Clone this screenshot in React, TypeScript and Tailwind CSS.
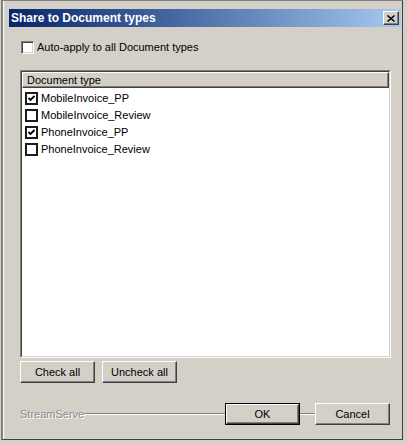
import { useState } from 'react';

type DocType = { name: string; checked: boolean };

const initialTypes: DocType[] = [
  { name: 'MobileInvoice_PP', checked: true },
  { name: 'MobileInvoice_Review', checked: false },
  { name: 'PhoneInvoice_PP', checked: true },
  { name: 'PhoneInvoice_Review', checked: false },
];

function Check({ checked, flat }: { checked: boolean; flat?: boolean }) {
  return (
    <span
      className={
        flat
          ? 'flex size-[13px] shrink-0 items-center justify-center border-2 border-[#1c1c1c] bg-white'
          : 'flex size-[13px] shrink-0 items-center justify-center border-t border-l border-[#808080] border-r border-b border-r-white border-b-white bg-white shadow-[inset_1px_1px_#404040,inset_-1px_-1px_#d4d0c8]'
      }
    >
      {checked && (
        <svg width="9" height="9" viewBox="0 0 9 9">
          <polyline points="1.5,4 3.5,6 7.5,2" fill="none" stroke="#000" strokeWidth="1.8" />
        </svg>
      )}
    </span>
  );
}

function Button({ label, isDefault }: { label: string; isDefault?: boolean }) {
  const inner = (
    <span className="flex h-full w-full items-center justify-center border-t border-l border-white border-r border-b border-r-[#404040] border-b-[#404040] bg-[#d4d0c8] shadow-[inset_-1px_-1px_#808080]">
      {label}
    </span>
  );
  return (
    <button
      type="button"
      className={
        isDefault
          ? 'h-[22px] w-[75px] shrink-0 border border-black p-0 text-[11px] leading-none'
          : 'h-[22px] w-[75px] shrink-0 p-0 text-[11px] leading-none'
      }
    >
      {inner}
    </button>
  );
}

export default function App() {
  const [types, setTypes] = useState<DocType[]>(initialTypes);
  const [autoApply, setAutoApply] = useState(false);

  const setAll = (checked: boolean) => setTypes(types.map((t) => ({ ...t, checked })));

  return (
    <div className="h-[444px] w-[407px] overflow-hidden bg-[#d4d0c8] pl-[1px] font-['Liberation_Sans',Arial,sans-serif] text-[11px] text-black">
      <div className="h-[440px] w-[402px] border-t border-l-2 border-[#808080] border-r border-b border-r-[#404040] border-b-[#404040]">
        <div className="h-full border-l border-white pt-[8px] pl-[5px] pr-[1px]">
          {/* title bar */}
          <div className="flex h-[18px] items-center justify-between bg-gradient-to-r from-[#0a246a] to-[#a6caf0] pr-[2px] pl-[2px]">
            <span className="text-[12px] font-bold text-white">Share to Document types</span>
            <span className="flex h-[14px] w-[16px] items-center justify-center border-t border-l border-white border-r border-b border-r-[#404040] border-b-[#404040] bg-[#d4d0c8] shadow-[inset_-1px_-1px_#808080]">
              <svg width="8" height="7" viewBox="0 0 8 7">
                <path d="M0.5 0.5 L7.5 6.5 M7.5 0.5 L0.5 6.5" stroke="#000" strokeWidth="1.5" />
              </svg>
            </span>
          </div>

          <div className="pl-[11px] pr-[10px]">
            {/* auto apply */}
            <label className="mt-[14px] flex h-[13px] items-center gap-[3px] pl-[1px]" onClick={() => setAutoApply(!autoApply)}>
              <Check checked={autoApply} />
              <span>Auto-apply to all Document types</span>
            </label>

            {/* list */}
            <div className="mt-[16px] h-[288px] border-t border-l border-[#808080] border-r border-b border-r-white border-b-white">
              <div className="h-full border-t border-l border-[#404040] border-r border-b border-r-[#d4d0c8] border-b-[#d4d0c8] bg-white">
                <div className="flex h-[16px] items-center border-t border-l border-white border-r border-b border-r-[#404040] border-b-[#404040] bg-[#d4d0c8] pl-[4px] shadow-[inset_-1px_-1px_#808080]">
                  Document type
                </div>
                <div className="pt-[2px]">
                  {types.map((t, i) => (
                    <div
                      key={t.name}
                      className="flex h-[17px] items-center gap-[3px] pl-[3px]"
                      onClick={() => setTypes(types.map((x, j) => (j === i ? { ...x, checked: !x.checked } : x)))}
                    >
                      <Check checked={t.checked} flat />
                      <span>{t.name}</span>
                    </div>
                  ))}
                </div>
              </div>
            </div>

            {/* check buttons */}
            <div className="mt-[3px] flex gap-[7px]">
              <span onClick={() => setAll(true)}>
                <Button label="Check all" />
              </span>
              <span onClick={() => setAll(false)}>
                <Button label="Uncheck all" />
              </span>
            </div>

            {/* footer */}
            <div className="mt-[20px] flex h-[22px] items-center pr-[1px]">
              <span className="text-[#8c8c8c] [text-shadow:1px_1px_0_#fff]">StreamServe</span>
              <span className="h-[2px] flex-1 border-t border-[#808080] border-b border-b-white" />
              <Button label="OK" isDefault />
              <span className="h-[2px] w-[15px] border-t border-[#808080] border-b border-b-white" />
              <Button label="Cancel" />
            </div>
          </div>
        </div>
      </div>
    </div>
  );
}
